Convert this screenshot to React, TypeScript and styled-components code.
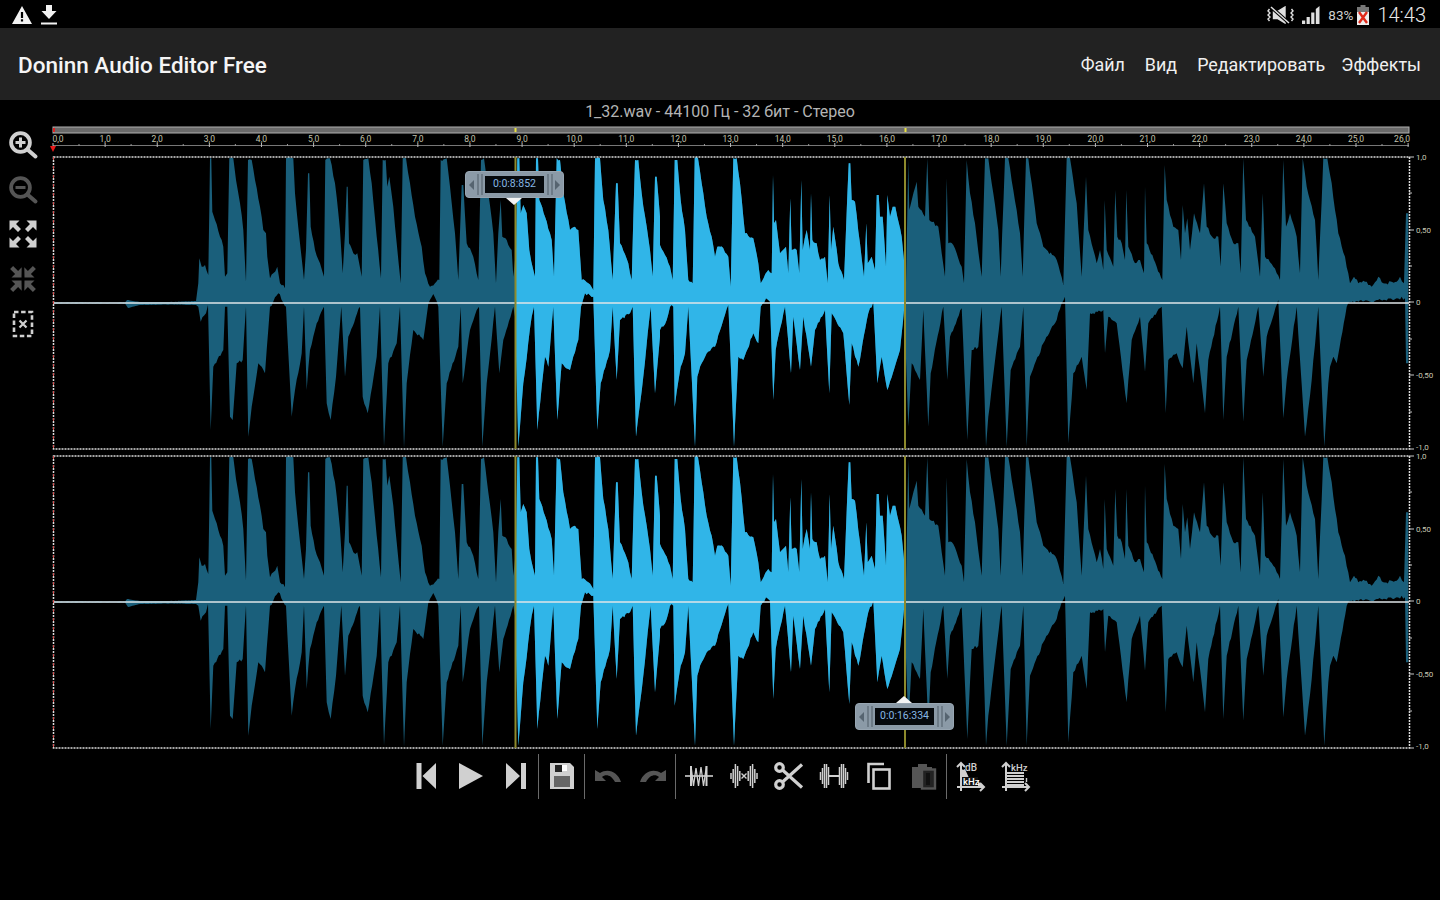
import React from 'react';
import styled, { createGlobalStyle } from 'styled-components';

const GlobalStyle = createGlobalStyle`
  html, body {
    margin: 0;
    height: 100%;
    background: #000;
    overflow: hidden;
    font-family: Roboto, "Liberation Sans", sans-serif;
  }
`;

const Screen = styled.div`
  width: 1440px;
  height: 900px;
  display: flex;
  flex-direction: column;
  background: #000;
`;

const StatusBar = styled.div`
  height: 28px;
  box-sizing: border-box;
  display: flex;
  align-items: center;
  justify-content: space-between;
  padding: 1px 14px 0 12px;
  color: #d9d9d9;
`;

const StatusGroup = styled.div`
  display: flex;
  align-items: center;
  gap: ${(p: { $gap: number }) => p.$gap}px;
`;

const BatteryText = styled.span`
  font-size: 13.5px;
  margin-right: -4px;
  color: #cfcfcf;
`;

const Clock = styled.span`
  font-size: 20px;
  font-weight: 300;
  color: #e8e8e8;
`;

const AppBar = styled.div`
  height: 72px;
  box-sizing: border-box;
  background: #222;
  display: flex;
  align-items: center;
  justify-content: space-between;
  padding: 2px 19px 0 18px;
`;

const AppTitle = styled.div`
  color: #f5f5f5;
  font-size: 22.5px;
  font-weight: 500;
`;

const Menu = styled.div`
  display: flex;
  gap: 20px;
  margin-top: -1px;
`;

const MenuItem = styled.span`
  color: #f0f0f0;
  font-size: 17.9px;
  &:last-child {
    margin-left: -4px;
  }
`;

const FileInfo = styled.div`
  height: 24px;
  line-height: 24px;
  text-align: center;
  color: #b4b4b4;
  font-size: 16px;
`;

const Workspace = styled.div`
  display: flex;
  height: 628px;
`;

const SideTools = styled.div`
  width: 45px;
  display: flex;
  flex-direction: column;
  align-items: center;
  gap: 5px;
`;

const IconCell = styled.div`
  width: 45px;
  height: 40px;
  display: flex;
  align-items: center;
  justify-content: center;
`;

const Canvas = styled.div`
  position: relative;
  flex: 1;
`;

const CanvasDrawing = styled.svg`
  display: block;
  width: 1395px;
  height: 628px;
`;

const Pill = styled.div<{ $left: number; $top: number }>`
  position: absolute;
  left: ${(p) => p.$left}px;
  top: ${(p) => p.$top}px;
  width: 99px;
  height: 27px;
  box-sizing: border-box;
  display: flex;
  align-items: center;
  justify-content: space-between;
  padding: 0 3px;
  background: #8b9aa7;
  border: 1px solid #98a6b2;
  border-radius: 4px;
`;

const PillPointer = styled.div<{ $up?: boolean }>`
  position: absolute;
  left: 40px;
  width: 0;
  height: 0;
  border-left: 8px solid transparent;
  border-right: 8px solid transparent;
  ${(p) =>
    p.$up
      ? 'top: -8px; border-bottom: 7px solid #f4f4f4;'
      : 'bottom: -8px; border-top: 7px solid #f4f4f4;'}
`;

const PillArrow = styled.div<{ $right?: boolean }>`
  width: 0;
  height: 0;
  border-top: 5px solid transparent;
  border-bottom: 5px solid transparent;
  ${(p) =>
    p.$right
      ? 'border-left: 5px solid #566470;'
      : 'border-right: 5px solid #566470;'}
`;

const PillGrip = styled.div`
  width: 6px;
  height: 21px;
  border-left: 2px solid #6d7b87;
  border-right: 2px solid #6d7b87;
  box-sizing: border-box;
`;

const Readout = styled.div`
  width: 59px;
  height: 17px;
  line-height: 15px;
  background: #06090c;
  color: #86b7e4;
  font-size: 10.5px;
  text-align: center;
`;

const Toolbar = styled.div`
  height: 48px;
  display: flex;
  justify-content: center;
  align-items: center;
`;

const ToolCell = styled.div`
  width: 45px;
  height: 48px;
  display: flex;
  align-items: center;
  justify-content: center;
`;

const Separator = styled.div`
  width: 1px;
  height: 45px;
  background: #6a6a6a;
`;

type Pt = [number, number];

// traced outlines, in the coordinates of three zoomed crops (3x)
const topA: Pt[] = [[55,400],[58,325],[65,350],[75,345],[85,375],[88,180],[90,25],[94,25],[97,185],[105,210],[120,260],[130,290],[135,380],[142,370],[148,25],[160,25],[168,90],[180,160],[190,240],[198,395],[204,30],[215,30],[225,90],[240,170],[250,240],[258,250],[262,320],[270,385],[280,370],[292,350],[300,400],[315,415],[318,25],[340,25],[345,130],[360,280],[372,390],[378,300],[384,70],[388,70],[392,230],[405,300],[420,340],[432,380],[436,30],[450,25],[465,100],[480,240],[488,370],[495,250],[500,110],[503,110],[507,280],[520,310],[532,310],[545,380],[550,30],[565,25],[575,100],[590,260],[603,385],[608,30],[617,30],[622,110],[628,80],[640,170],[650,280],[662,400],[668,25],[678,25],[690,100],[705,200],[725,290],[735,370],[750,410],[765,400],[778,390],[782,30],[800,25],[810,110],[825,250],[835,390],[845,105],[850,105],[860,280],[880,320],[895,390],[903,30],[912,25],[925,130],[940,250],[948,400],[955,250],[962,150],[967,260],[980,270],[995,300],[1000,380],[1008,300],[1012,25],[1018,25],[1022,190],[1030,165],[1040,190],[1048,300],[1060,360],[1065,380],[1068,25],[1074,25],[1078,150],[1095,200],[1115,270],[1122,380],[1130,25],[1140,30],[1150,130],[1170,240],[1185,230],[1195,240],[1205,390],[1225,400],[1240,420],[1245,25],[1260,25],[1270,150],[1285,240],[1298,390],[1308,100],[1313,100],[1320,280],[1345,340],[1355,390],[1365,30],[1375,30],[1385,130],[1410,300],[1418,380],[1425,80],[1430,80],[1440,200]];
const bottomA: Pt[] = [[55,470],[62,515],[78,490],[84,465],[92,840],[100,650],[130,600],[135,470],[142,470],[150,800],[158,810],[170,640],[188,630],[198,470],[205,860],[215,770],[235,640],[255,670],[270,470],[295,430],[318,470],[335,800],[345,720],[365,610],[372,470],[380,720],[390,600],[410,520],[432,470],[440,760],[452,810],[468,680],[484,470],[495,680],[505,560],[540,470],[548,740],[563,790],[590,620],[600,470],[612,890],[625,640],[650,580],[660,470],[672,895],[680,700],[700,540],[730,570],[745,462],[760,432],[775,470],[788,890],[800,700],[835,590],[842,470],[848,700],[870,540],[890,480],[897,470],[907,890],[920,700],[945,470],[958,670],[970,570],[1000,470],[1005,500],[1015,890],[1030,700],[1055,500],[1062,470],[1072,840],[1085,710],[1095,620],[1105,650],[1120,470],[1132,810],[1145,640],[1170,660],[1195,570],[1203,470],[1215,430],[1240,440],[1252,840],[1262,700],[1290,600],[1298,470],[1310,690],[1320,510],[1350,490],[1358,470],[1368,860],[1390,680],[1412,470],[1425,730],[1440,560]];
const topB: Pt[] = [[0,285],[15,315],[30,350],[38,390],[44,30],[52,30],[62,150],[75,240],[85,390],[98,400],[104,25],[114,25],[125,100],[140,200],[155,260],[165,320],[172,290],[190,295],[205,320],[212,410],[220,25],[230,25],[240,100],[255,250],[280,265],[295,340],[302,400],[325,360],[335,370],[339,75],[342,220],[348,210],[360,310],[378,290],[385,370],[391,145],[395,300],[410,300],[418,370],[424,90],[428,300],[440,240],[450,300],[453,130],[457,270],[470,280],[480,330],[495,320],[503,400],[509,135],[513,300],[520,230],[535,340],[552,390],[566,40],[571,40],[575,150],[585,155],[600,280],[612,380],[619,220],[623,340],[635,320],[645,360],[650,135],[656,135],[660,200],[668,200],[678,350],[682,135],[690,200],[698,170],[706,170],[712,200],[725,260],[733,340],[738,400],[745,30],[748,180],[770,95],[775,170],[795,200],[802,25],[808,210],[835,230],[855,380],[860,85],[865,280],[880,285],[905,350],[912,400],[920,30],[930,130],[945,220],[965,380],[975,25],[985,25],[1000,130],[1015,240],[1022,380],[1035,25],[1045,25],[1060,120],[1080,250],[1088,380],[1098,25],[1105,25],[1115,100],[1130,220],[1150,290],[1190,330],[1210,405],[1220,25],[1230,25],[1250,160],[1265,380],[1278,80],[1285,240],[1310,340],[1320,300],[1330,360],[1334,150],[1340,300],[1360,350],[1366,120],[1372,260],[1385,280],[1395,330],[1399,120],[1405,290],[1425,340],[1440,330]];
const bottomB: Pt[] = [[0,540],[20,510],[30,470],[40,470],[44,770],[50,725],[62,650],[75,610],[85,470],[105,890],[112,680],[125,640],[140,610],[165,590],[190,510],[205,465],[222,890],[235,620],[250,630],[280,550],[295,580],[302,470],[318,445],[330,455],[340,750],[347,600],[375,470],[393,670],[400,500],[420,660],[430,500],[453,650],[465,540],[495,480],[508,730],[515,490],[550,550],[568,765],[575,580],[595,650],[625,490],[640,455],[652,700],[665,620],[682,720],[720,600],[733,470],[745,830],[755,640],[780,690],[790,480],[805,830],[812,670],[850,470],[862,690],[870,560],[905,475],[922,870],[935,600],[955,590],[965,470],[978,890],[985,800],[1025,470],[1040,890],[1052,660],[1080,590],[1090,470],[1100,890],[1110,680],[1150,580],[1190,510],[1205,460],[1215,440],[1225,880],[1240,670],[1265,620],[1280,720],[1290,490],[1330,480],[1335,610],[1345,500],[1370,520],[1400,760],[1415,570],[1440,500]];
const topC: Pt[] = [[432,370],[435,110],[440,280],[470,350],[487,390],[494,45],[500,150],[520,230],[535,240],[543,330],[548,165],[555,250],[562,205],[570,300],[582,190],[600,250],[612,100],[620,230],[640,265],[655,260],[662,350],[670,100],[680,220],[700,280],[715,280],[722,370],[730,25],[738,210],[765,260],[780,380],[788,130],[795,320],[820,350],[840,390],[850,30],[858,230],[870,190],[890,260],[900,370],[908,25],[920,110],[945,210],[955,390],[970,25],[982,25],[995,100],[1015,250],[1035,320],[1050,400],[1062,380],[1075,400],[1100,395],[1115,410],[1135,380],[1150,400],[1190,395],[1200,380],[1212,400],[1218,190],[1225,190]];
const bottomC: Pt[] = [[435,665],[445,520],[485,470],[497,790],[505,630],[530,610],[548,655],[560,530],[580,700],[590,580],[615,790],[625,630],[660,470],[670,810],[680,620],[715,470],[730,815],[740,630],[775,470],[790,680],[800,560],[835,450],[850,805],[860,690],[890,470],[915,860],[935,690],[955,470],[973,890],[985,700],[990,650],[1000,620],[1010,640],[1040,470],[1050,455],[1110,455],[1130,450],[1190,445],[1215,445],[1218,640],[1225,640]];

const fromCrop = (pts: Pt[], x0: number, y0 = 150): Pt[] =>
  pts.map(([x, y]) => [x0 + x / 3, y0 + y / 3]);

// adds the small steps the real samples have along long edges
function roughen(pts: Pt[], seed: number): Pt[] {
  const out: Pt[] = [];
  let n = seed;
  pts.forEach((p, i) => {
    const q = pts[i + 1];
    out.push(p);
    if (!q) return;
    const steps = Math.floor((q[0] - p[0]) / 1.4);
    for (let s = 1; s < steps; s++) {
      n = (n * 9301 + 49297) % 233280;
      const t = s / steps;
      const size = p[0] < 196 ? 0.3 : 3.4;
      const jitter = (n / 233280 - 0.5) * size;
      out.push([p[0] + (q[0] - p[0]) * t, p[1] + (q[1] - p[1]) * t + jitter]);
    }
  });
  return out;
}

const topEdge = roughen(
  [[53, 302.4], [125, 302.4], [127, 300], [140, 302], [170, 302], [196, 301],
    ...fromCrop(topA, 180), ...fromCrop(topB, 660), ...fromCrop(topC, 1000)] as Pt[],
  17,
);
const bottomEdge = roughen(
  [[53, 303.6], [125, 303.6], [128, 308], [140, 305], [170, 304.5], [196, 305],
    ...fromCrop(bottomA, 180), ...fromCrop(bottomB, 660), ...fromCrop(bottomC, 1000)] as Pt[],
  91,
);
const wavePoints = [...topEdge, ...bottomEdge.slice().reverse()]
  .map(([x, y]) => `${x.toFixed(1)},${y.toFixed(1)}`)
  .join(' ');

const seconds = Array.from({ length: 27 }, (_, i) => i);
const secondX = (s: number) => 53 + s * 52.12;
const labelShift = (s: number) => (s === 0 ? 5 : s === 26 ? -6 : 0);
// text, offset of its tick, offset of its baseline from the tick
const axisLabels: [string, number, number][] = [
  ['1,0', 0, 3],
  ['0,50', 73, 3],
  ['0', 145, 3],
  ['-0,50', 218, 3],
  ['-1,0', 292, 0.5],
];

function Track({ offset }: { offset: number }) {
  const top = 157 + offset;
  return (
    <g>
      <g transform={`translate(0 ${offset})`}>
        <polygon points={wavePoints} fill="#1a5f7b" />
        <polygon points={wavePoints} fill="#30b5e8" clipPath="url(#selection)" />
      </g>
      <rect x="53.5" y={top} width="1356" height="292" fill="none" stroke="#dcdcdc" strokeWidth="1.5" strokeDasharray="2 1" />
      <line x1="53.5" x2="53.5" y1={top} y2={top + 292} stroke="#d85050" strokeWidth="1" strokeDasharray="3 6" />
      <line x1="54" x2="1409" y1={top + 146} y2={top + 146} stroke="#dfe6e8" strokeWidth="1.4" />
      <line x1="515.5" x2="515.5" y1={top} y2={top + 292} stroke="#8d8a2c" strokeWidth="2" />
      <line x1="905" x2="905" y1={top} y2={top + 292} stroke="#8d8a2c" strokeWidth="2" />
      {axisLabels.map(([text, dy, baseline]) => (
        <g key={text}>
          <line x1="1409" x2="1414" y1={top + dy} y2={top + dy} stroke="#c8c8c8" />
          <text x="1416" y={top + dy + baseline} fontSize="8" fill="#c9c9b4" fontFamily="Roboto, sans-serif">{text}</text>
        </g>
      ))}
      {[36, 109, 182, 255].map((dy) => (
        <line key={dy} x1="1409" x2="1412" y1={top + dy} y2={top + dy} stroke="#c8c8c8" />
      ))}
    </g>
  );
}

function WaveCanvas() {
  return (
    <CanvasDrawing viewBox="45 124 1395 628">
      <defs>
        <clipPath id="selection">
          <rect x="515" y="0" width="390" height="900" />
        </clipPath>
      </defs>
      <rect x="53" y="127" width="1356" height="6" fill="#6a6a6a" stroke="#b0b0b0" strokeWidth="1" />
      <rect x="53" y="128" width="2" height="4" fill="#e02020" />
      <rect x="514.5" y="128" width="2" height="4" fill="#e8e040" />
      <rect x="904.5" y="128" width="2" height="4" fill="#e8e040" />
      <line x1="53" x2="1409" y1="145.5" y2="145.5" stroke="#777" />
      {seconds.map((s) => (
        <g key={s}>
          <line x1={secondX(s)} x2={secondX(s)} y1="143" y2="147" stroke="#bbb" />
          {s < 26 && <line x1={secondX(s) + 26} x2={secondX(s) + 26} y1="144" y2="146" stroke="#999" />}
          <text x={secondX(s) + labelShift(s)} y="142" textAnchor="middle" fontSize="8.5" fill="#c2c2ac" fontFamily="Roboto, sans-serif">
            {s},0
          </text>
        </g>
      ))}
      <polygon points="50,146 56,146 53,152" fill="#e81818" />
      <Track offset={0} />
      <Track offset={299} />
    </CanvasDrawing>
  );
}

const LIGHT = '#d0d0d0';
const DIM = '#555';

function ZoomIcon({ plus, color }: { plus?: boolean; color: string }) {
  return (
    <svg width="32" height="32" viewBox="0 0 32 32">
      <circle cx="13.5" cy="14.5" r="9.4" fill="none" stroke={color} strokeWidth="3.8" />
      <line x1="21" y1="22" x2="28.5" y2="28.5" stroke={color} strokeWidth="4" strokeLinecap="round" />
      <line x1="8.5" y1="14.5" x2="18.5" y2="14.5" stroke={color} strokeWidth="3" />
      {plus && <line x1="13.5" y1="9.5" x2="13.5" y2="19.5" stroke={color} strokeWidth="3" />}
    </svg>
  );
}

function FourArrows({ inward, color }: { inward?: boolean; color: string }) {
  const d = inward
    ? 'M14.5 14.5H4.5l3.6-3.6-5-5 3-3 5 5 3.6-3.6z'
    : 'M2.5 2.5h10L9 6l5 5-3 3-5-5-3.5 3.5z';
  return (
    <svg width="32" height="32" viewBox="0 0 32 32" fill={color}>
      <path d={d} />
      <path d={d} transform="matrix(-1 0 0 1 32 0)" />
      <path d={d} transform="matrix(1 0 0 -1 0 32)" />
      <path d={d} transform="matrix(-1 0 0 -1 32 32)" />
    </svg>
  );
}

function ClearSelectionIcon() {
  return (
    <svg width="32" height="32" viewBox="0 0 32 32" fill="none" stroke={LIGHT}>
      <rect x="7" y="4" width="18" height="24" strokeWidth="2.6" strokeDasharray="4.5 2.6" />
      <path d="M12.5 12.5l7 7M19.5 12.5l-7 7" strokeWidth="2.2" />
    </svg>
  );
}

function TransportIcon({ kind }: { kind: 'prev' | 'play' | 'next' }) {
  return (
    <svg width="32" height="32" viewBox="0 0 32 32" fill={LIGHT}>
      {kind === 'prev' && <path d="M6.5 3h5v26h-5zM12.5 16L26 3v26z" />}
      {kind === 'play' && <path d="M4 3l24 13L4 29z" />}
      {kind === 'next' && <path d="M6 3l14 13L6 29zM21 3h5v26h-5z" />}
    </svg>
  );
}

function SaveIcon() {
  return (
    <svg width="32" height="32" viewBox="0 0 32 32">
      <path d="M4 3h20l4 4v22H4z" fill={LIGHT} />
      <rect x="8" y="16" width="16" height="11" fill="#666" />
      <rect x="16" y="5" width="5" height="6" fill="#fff" />
      <rect x="9" y="5" width="7" height="7" fill="#222" />
    </svg>
  );
}

function HistoryIcon({ mirrored }: { mirrored?: boolean }) {
  return (
    <svg width="32" height="32" viewBox="0 0 32 32" fill={DIM} style={mirrored ? { transform: 'scaleX(-1)' } : undefined}>
      <path d="M3 10v11h11l-4-4c3.5-3 9-2.5 13 5h6C26 12 16 7.5 8 13z" />
    </svg>
  );
}

function WaveTrimIcon() {
  return (
    <svg width="32" height="32" viewBox="0 0 32 32" fill="none" stroke={LIGHT}>
      <line x1="2" x2="30" y1="16" y2="16" strokeWidth="1.6" />
      <path d="M8 6v20M23.5 6v20" strokeWidth="2" />
      <path d="M8 6l2.5 20 2.5-18 2.5 18 2.5-19 2.5 19 3-20" strokeWidth="1.3" />
    </svg>
  );
}

function WaveDeleteIcon() {
  const side = [3, 7, 12, 10, 5];
  return (
    <svg width="32" height="32" viewBox="0 0 32 32" stroke={LIGHT} fill="none">
      {side.map((h, i) => (
        <g key={i}>
          <line x1={3 + i * 2.2} x2={3 + i * 2.2} y1={16 - h} y2={16 + h} strokeWidth="1.5" />
          <line x1={29 - i * 2.2} x2={29 - i * 2.2} y1={16 - h} y2={16 + h} strokeWidth="1.5" />
        </g>
      ))}
      <path d="M13.5 13.5l5 5M18.5 13.5l-5 5" strokeWidth="1.4" />
    </svg>
  );
}

function ScissorsIcon() {
  return (
    <svg width="32" height="32" viewBox="0 0 32 32" stroke={LIGHT} fill="none" strokeWidth="3.2">
      <circle cx="6.5" cy="7.5" r="3.8" />
      <circle cx="6.5" cy="24.5" r="3.8" />
      <path d="M9.5 10L29 27.5M9.5 22L29 4.5" />
    </svg>
  );
}

function WaveSilenceIcon() {
  const side = [4, 8, 12, 12, 9];
  return (
    <svg width="32" height="32" viewBox="0 0 32 32" stroke={LIGHT} fill="none">
      <line x1="11" x2="21" y1="16" y2="16" strokeWidth="2" />
      {side.map((h, i) => (
        <g key={i}>
          <line x1={2.5 + i * 2} x2={2.5 + i * 2} y1={16 - h} y2={16 + h} strokeWidth="1.5" />
          <line x1={29.5 - i * 2} x2={29.5 - i * 2} y1={16 - h} y2={16 + h} strokeWidth="1.5" />
        </g>
      ))}
    </svg>
  );
}

function CopyIcon() {
  return (
    <svg width="32" height="32" viewBox="0 0 32 32" fill="none" stroke={LIGHT} strokeWidth="2.6">
      <rect x="10.5" y="9.5" width="16" height="19" />
      <path d="M5.5 23V4H21" />
    </svg>
  );
}

function PasteIcon() {
  return (
    <svg width="32" height="32" viewBox="0 0 32 32">
      <path d="M4 7h6V4h9v3h5v21H4z" fill={DIM} />
      <rect x="14" y="9.5" width="13" height="19" fill="#222" stroke={DIM} strokeWidth="2.4" />
      <rect x="18" y="13" width="4" height="12" fill="#111" />
    </svg>
  );
}

const glyphText = { fontFamily: 'Roboto, sans-serif', fontWeight: 500 };

function SpectrumIcon() {
  return (
    <svg width="32" height="32" viewBox="0 0 32 32">
      <path d="M6 7l3 3 2-1 4 9 5 2 3 0 6 6v2H6z" fill={LIGHT} />
      <path d="M7 31V3M3 7l4-4 4 4M3 27h27M26 23l4 4-4 4" stroke={LIGHT} strokeWidth="2" fill="none" />
      <rect x="8" y="17" width="16" height="9" fill="#111" />
      <text x="9" y="25" fontSize="9.5" fill="#fff" style={glyphText}>kHz</text>
      <text x="11" y="11" fontSize="10" fill={LIGHT} style={glyphText}>dB</text>
    </svg>
  );
}

function SpectrogramIcon() {
  return (
    <svg width="32" height="32" viewBox="0 0 32 32">
      <path d="M7 31V3M3 7l4-4 4 4M3 27h27M26 23l4 4-4 4" stroke={LIGHT} strokeWidth="2" fill="none" />
      <path d="M8 13h17M8 16h17M8 19h17M8 22h17M8 25h17" stroke={LIGHT} strokeWidth="1.8" />
      <text x="12" y="11" fontSize="9.5" fill={LIGHT} style={glyphText}>kHz</text>
      <path d="M27.5 18v4M27.5 23.5v1.5" stroke={LIGHT} strokeWidth="1.4" />
    </svg>
  );
}

function WarningIcon() {
  return (
    <svg width="20" height="18" viewBox="0 0 20 18">
      <path fillRule="evenodd" fill="#f2f2f2" d="M10 0l10 18H0zM8.9 6v6h2.2V6zM8.9 13.2v2.2h2.2v-2.2z" />
    </svg>
  );
}

function DownloadIcon() {
  return (
    <svg width="16" height="20" viewBox="0 0 16 20" fill="#f2f2f2">
      <path d="M5 0h6v6h4.5L8 14 .5 6H5zM0 17.5h16V19.5H0z" />
    </svg>
  );
}

function MuteIcon() {
  return (
    <svg width="27" height="18" viewBox="0 0 27 18" fill="none" stroke="#e0e0e0" strokeWidth="1.4">
      <path d="M6.5 5.5h4L18 1v16l-7.5-4.5h-4z" fill="#e0e0e0" />
      <path d="M4 1l18 16" stroke="#000" strokeWidth="3.4" />
      <path d="M4 1l18 16" strokeWidth="1.5" />
      <path d="M2.5 3l-1.5 2 2 2-2 2 2 2-2 2 1.5 2M24.5 3l1.5 2-2 2 2 2-2 2 2 2-1.5 2" />
    </svg>
  );
}

function SignalIcon() {
  return (
    <svg width="18" height="18" viewBox="0 0 18 18" fill="#e0e0e0">
      <path d="M0 14.5h3.2V18H0zM4.6 11h3.2v7H4.6zM9.2 6.5h3.2V18H9.2zM13.8 3L17.5 0v18h-3.7z" />
    </svg>
  );
}

function BatteryIcon() {
  return (
    <svg width="12" height="20" viewBox="0 0 12 20">
      <rect x="3.5" y="0" width="5" height="3" fill="#777" />
      <rect x="0" y="2" width="12" height="5" fill="#777" />
      <rect x="0" y="7" width="12" height="13" fill="#eee" />
      <path d="M2 7l8 11M10 7L2 18" stroke="#e02a1a" strokeWidth="2.4" />
    </svg>
  );
}

function TimePill({ time, left, top, up }: { time: string; left: number; top: number; up?: boolean }) {
  return (
    <Pill $left={left} $top={top}>
      <PillPointer $up={up} />
      <PillArrow />
      <PillGrip />
      <Readout>{time}</Readout>
      <PillGrip />
      <PillArrow $right />
    </Pill>
  );
}

export default function App() {
  return (
    <Screen>
      <GlobalStyle />
      <StatusBar>
        <StatusGroup $gap={9}>
          <WarningIcon />
          <DownloadIcon />
        </StatusGroup>
        <StatusGroup $gap={8}>
          <MuteIcon />
          <SignalIcon />
          <BatteryText>83%</BatteryText>
          <BatteryIcon />
          <Clock>14:43</Clock>
        </StatusGroup>
      </StatusBar>
      <AppBar>
        <AppTitle>Doninn Audio Editor Free</AppTitle>
        <Menu>
          <MenuItem>Файл</MenuItem>
          <MenuItem>Вид</MenuItem>
          <MenuItem>Редактировать</MenuItem>
          <MenuItem>Эффекты</MenuItem>
        </Menu>
      </AppBar>
      <FileInfo>1_32.wav - 44100 Гц - 32 бит - Стерео</FileInfo>
      <Workspace>
        <SideTools>
          <IconCell><ZoomIcon plus color={LIGHT} /></IconCell>
          <IconCell><ZoomIcon color={DIM} /></IconCell>
          <IconCell><FourArrows color={LIGHT} /></IconCell>
          <IconCell><FourArrows inward color={DIM} /></IconCell>
          <IconCell><ClearSelectionIcon /></IconCell>
        </SideTools>
        <Canvas>
          <WaveCanvas />
          <TimePill time="0:0:8:852" left={420} top={47} />
          <TimePill time="0:0:16:334" left={810} top={579} up />
        </Canvas>
      </Workspace>
      <Toolbar>
        <ToolCell><TransportIcon kind="prev" /></ToolCell>
        <ToolCell><TransportIcon kind="play" /></ToolCell>
        <ToolCell><TransportIcon kind="next" /></ToolCell>
        <Separator />
        <ToolCell><SaveIcon /></ToolCell>
        <Separator />
        <ToolCell><HistoryIcon /></ToolCell>
        <ToolCell><HistoryIcon mirrored /></ToolCell>
        <Separator />
        <ToolCell><WaveTrimIcon /></ToolCell>
        <ToolCell><WaveDeleteIcon /></ToolCell>
        <ToolCell><ScissorsIcon /></ToolCell>
        <ToolCell><WaveSilenceIcon /></ToolCell>
        <ToolCell><CopyIcon /></ToolCell>
        <ToolCell><PasteIcon /></ToolCell>
        <Separator />
        <ToolCell><SpectrumIcon /></ToolCell>
        <ToolCell><SpectrogramIcon /></ToolCell>
      </Toolbar>
    </Screen>
  );
}
